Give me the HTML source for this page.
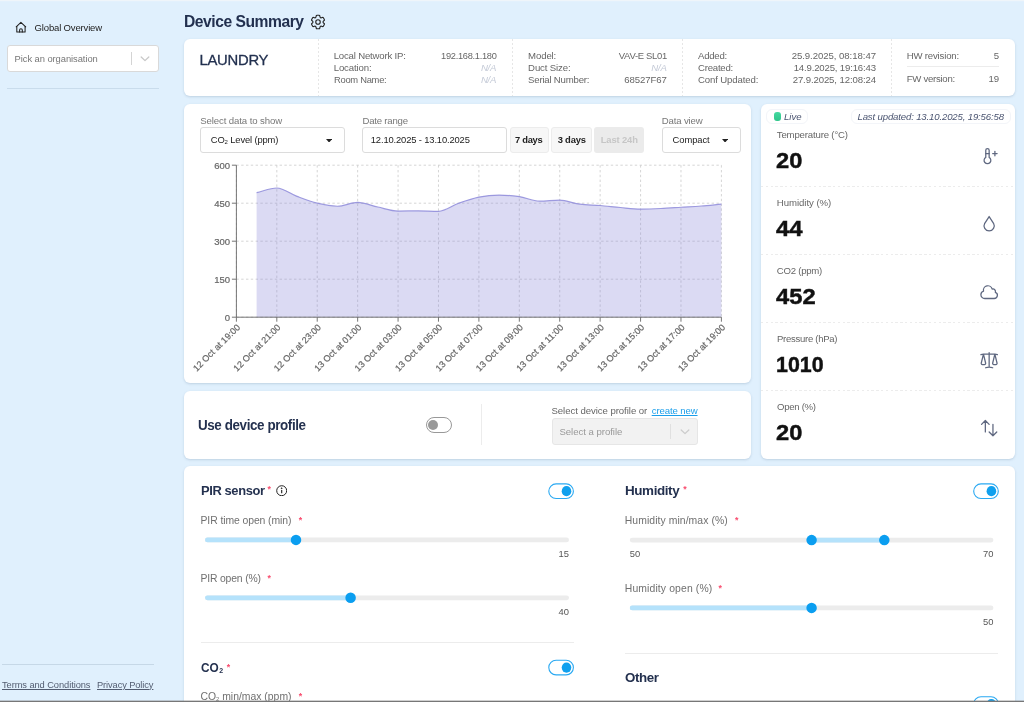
<!DOCTYPE html>
<html lang="en"><head><meta charset="utf-8"><title>Device Summary</title>
<style>
html,body{margin:0;padding:0}
body{width:1024px;height:702px;overflow:hidden;position:relative;background:#e0f0fd;font-family:"Liberation Sans",sans-serif}
.t{position:absolute;white-space:nowrap;line-height:1;display:block}
.b{position:absolute;display:block}
#root{position:absolute;left:0;top:0;width:1024px;height:702px;will-change:transform}
</style></head><body>
<div id="root">
<svg class="b" style="left:0;top:0" width="40" height="40" viewBox="0 0 40 40" fill="none" stroke="#222" stroke-width="1.05" stroke-linejoin="round" stroke-linecap="round"><path d="M16.2 26.8 20.9 22.3 25.7 26.9"/><path d="M16.8 26.4V32H25.1V26.4"/><path d="M19.6 32V30a1.35 1.35 0 0 1 2.7 0V32"/></svg>
<span class="t" style="top:23.00px;font-size:9.50px;color:#222;left:34.60px;letter-spacing:-0.157px;">Global Overview</span>
<div class="b" style="left:7.00px;top:45.30px;width:151.60px;height:27.00px;background:#fff;border:1px solid #d9d9d9;border-radius:3px;box-sizing:border-box;"></div>
<span class="t" style="top:54.05px;font-size:9.40px;color:#777;left:14.60px;letter-spacing:-0.066px;">Pick an organisation</span>
<div class="b" style="left:131.00px;top:51.80px;width:1.00px;height:13.60px;background:#d4d4d4;"></div>
<svg class="b" style="left:140px;top:55px" width="10" height="8" viewBox="0 0 10 8" fill="none" stroke="#c8c8c8" stroke-width="1.3" stroke-linecap="round" stroke-linejoin="round"><path d="M1.2 2 5 5.6 8.8 2"/></svg>
<div class="b" style="left:7.00px;top:88.40px;width:151.60px;height:1.00px;background:#c9dcec;"></div>
<div class="b" style="left:2.00px;top:664.00px;width:151.50px;height:1.00px;background:#c6d8e7;"></div>
<span class="t" style="top:680.60px;font-size:9.30px;color:#525c70;left:2.00px;letter-spacing:-0.076px;text-decoration:underline;">Terms and Conditions</span>
<span class="t" style="top:680.60px;font-size:9.30px;color:#525c70;left:97.00px;letter-spacing:-0.106px;text-decoration:underline;">Privacy Policy</span>
<span class="t" style="top:13.85px;font-size:15.80px;color:#22304f;left:184.30px;font-weight:700;letter-spacing:-0.474px;transform:scaleX(0.9902);transform-origin:0 50%;">Device Summary</span>
<svg class="b" style="left:309.35px;top:12.5px" width="18" height="18" viewBox="0 0 24 24" fill="none" stroke="#222" stroke-width="1.5" stroke-linecap="round" stroke-linejoin="round"><path d="M9.594 3.94c.09-.542.56-.94 1.11-.94h2.593c.55 0 1.02.398 1.11.94l.213 1.281c.063.374.313.686.645.87.074.04.147.083.22.127.325.196.72.257 1.075.124l1.217-.456a1.125 1.125 0 0 1 1.37.49l1.296 2.247a1.125 1.125 0 0 1-.26 1.431l-1.003.827c-.293.241-.438.613-.43.992a7.723 7.723 0 0 1 0 .255c-.008.378.137.75.43.991l1.004.827c.424.35.534.955.26 1.43l-1.298 2.247a1.125 1.125 0 0 1-1.369.491l-1.217-.456c-.355-.133-.75-.072-1.076.124a6.470 6.470 0 0 1-.22.128c-.331.183-.581.495-.644.869l-.213 1.281c-.09.543-.56.94-1.110.94h-2.594c-.55 0-1.019-.398-1.11-.94l-.213-1.281c-.062-.374-.312-.686-.644-.87a6.520 6.520 0 0 1-.22-.127c-.325-.196-.72-.257-1.076-.124l-1.217.456a1.125 1.125 0 0 1-1.369-.49l-1.297-2.247a1.125 1.125 0 0 1 .26-1.431l1.004-.827c.292-.24.437-.613.43-.991a6.932 6.932 0 0 1 0-.255c.007-.38-.138-.751-.43-.992l-1.004-.827a1.125 1.125 0 0 1-.26-1.43l1.297-2.247a1.125 1.125 0 0 1 1.37-.491l1.216.456c.356.133.751.072 1.076-.124.072-.044.146-.086.22-.128.332-.183.582-.495.644-.869l.214-1.280Z"/><path d="M15 12a3 3 0 1 1-6 0 3 3 0 0 1 6 0Z"/></svg>
<div class="b" style="left:184.00px;top:39.00px;width:830.60px;height:57.00px;background:#fff;border-radius:6px;box-shadow:0 1px 2.5px rgba(70,100,130,.22);"></div>
<span class="t" style="top:52.85px;font-size:14.80px;color:#22304f;left:199.50px;letter-spacing:-0.244px;-webkit-text-stroke:0.3px #22304f;">LAUNDRY</span>
<div class="b" style="left:318.00px;top:39.00px;width:1.00px;height:57.00px;background:repeating-linear-gradient(to bottom,#e6e6e6 0 2px,transparent 2px 4px);"></div>
<div class="b" style="left:511.80px;top:39.00px;width:1.00px;height:57.00px;background:repeating-linear-gradient(to bottom,#e6e6e6 0 2px,transparent 2px 4px);"></div>
<div class="b" style="left:682.20px;top:39.00px;width:1.00px;height:57.00px;background:repeating-linear-gradient(to bottom,#e6e6e6 0 2px,transparent 2px 4px);"></div>
<div class="b" style="left:890.50px;top:39.00px;width:1.00px;height:57.00px;background:repeating-linear-gradient(to bottom,#e6e6e6 0 2px,transparent 2px 4px);"></div>
<span class="t" style="top:50.95px;font-size:9.60px;color:#666;left:333.70px;letter-spacing:-0.189px;">Local Network IP:</span>
<span class="t" style="top:50.95px;font-size:9.60px;color:#666;right:527.88px;letter-spacing:-0.288px;transform:scaleX(0.9648);transform-origin:100% 50%;">192.168.1.180</span>
<span class="t" style="top:62.95px;font-size:9.60px;color:#666;left:333.70px;letter-spacing:-0.120px;">Location:</span>
<span class="t" style="top:62.95px;font-size:9.60px;color:#c3c9d6;right:527.87px;font-style:italic;letter-spacing:-0.270px;">N/A</span>
<span class="t" style="top:74.95px;font-size:9.60px;color:#666;left:333.70px;letter-spacing:-0.288px;transform:scaleX(0.9767);transform-origin:0 50%;">Room Name:</span>
<span class="t" style="top:74.95px;font-size:9.60px;color:#c3c9d6;right:527.87px;font-style:italic;letter-spacing:-0.270px;">N/A</span>
<span class="t" style="top:50.95px;font-size:9.60px;color:#666;left:528.10px;letter-spacing:-0.123px;">Model:</span>
<span class="t" style="top:50.95px;font-size:9.60px;color:#666;right:357.48px;letter-spacing:-0.288px;transform:scaleX(0.9847);transform-origin:100% 50%;">VAV-E SL01</span>
<span class="t" style="top:62.95px;font-size:9.60px;color:#666;left:528.10px;letter-spacing:-0.139px;">Duct Size:</span>
<span class="t" style="top:62.95px;font-size:9.60px;color:#c3c9d6;right:357.47px;font-style:italic;letter-spacing:-0.270px;">N/A</span>
<span class="t" style="top:74.95px;font-size:9.60px;color:#666;left:528.10px;letter-spacing:-0.202px;">Serial Number:</span>
<span class="t" style="top:74.95px;font-size:9.60px;color:#666;right:357.31px;letter-spacing:-0.106px;">68527F67</span>
<span class="t" style="top:50.95px;font-size:9.60px;color:#666;left:698.00px;letter-spacing:-0.245px;">Added:</span>
<span class="t" style="top:50.95px;font-size:9.60px;color:#666;right:148.06px;letter-spacing:-0.056px;">25.9.2025, 08:18:47</span>
<span class="t" style="top:62.95px;font-size:9.60px;color:#666;left:698.00px;letter-spacing:-0.217px;">Created:</span>
<span class="t" style="top:62.95px;font-size:9.60px;color:#666;right:148.17px;letter-spacing:-0.167px;">14.9.2025, 19:16:43</span>
<span class="t" style="top:74.95px;font-size:9.60px;color:#666;left:698.00px;letter-spacing:-0.126px;">Conf Updated:</span>
<span class="t" style="top:74.95px;font-size:9.60px;color:#666;right:148.11px;letter-spacing:-0.112px;">27.9.2025, 12:08:24</span>
<span class="t" style="top:50.95px;font-size:9.60px;color:#666;left:906.70px;letter-spacing:-0.174px;">HW revision:</span>
<span class="t" style="top:50.95px;font-size:9.60px;color:#666;right:24.90px;">5</span>
<div class="b" style="left:906.70px;top:66.20px;width:92.40px;height:1.00px;background:#ececec;"></div>
<span class="t" style="top:73.95px;font-size:9.60px;color:#666;left:906.70px;letter-spacing:-0.271px;">FW version:</span>
<span class="t" style="top:73.95px;font-size:9.60px;color:#666;right:24.90px;">19</span>
<div class="b" style="left:184.00px;top:103.50px;width:566.70px;height:279.50px;background:#fff;border-radius:6px;box-shadow:0 1px 2.5px rgba(70,100,130,.22);"></div>
<span class="t" style="top:115.95px;font-size:9.60px;color:#777;left:200.20px;letter-spacing:-0.099px;">Select data to show</span>
<span class="t" style="top:115.95px;font-size:9.60px;color:#777;left:362.50px;letter-spacing:-0.222px;">Date range</span>
<span class="t" style="top:115.95px;font-size:9.60px;color:#777;left:661.70px;letter-spacing:-0.144px;">Data view</span>
<div class="b" style="left:200.20px;top:127.00px;width:144.50px;height:25.60px;background:#fff;border:1px solid #dcdcdc;border-radius:3px;box-sizing:border-box;"></div>
<span class="t" style="top:135.05px;font-size:9.40px;color:#222;left:210.80px;letter-spacing:-0.14px;">CO<span style="font-size:6px;position:relative;top:1px">2</span> Level (ppm)</span>
<svg class="b" style="left:326px;top:138.5px" width="6.2" height="3.6" viewBox="0 0 7 4"><path d="M0 0h7L3.5 4z" fill="#222"/></svg>
<div class="b" style="left:362.20px;top:127.00px;width:144.60px;height:25.60px;background:#fff;border:1px solid #dcdcdc;border-radius:3px;box-sizing:border-box;"></div>
<span class="t" style="top:135.05px;font-size:9.40px;color:#222;left:370.80px;letter-spacing:-0.139px;">12.10.2025 - 13.10.2025</span>
<div class="b" style="left:509.50px;top:127.00px;width:39.30px;height:25.60px;background:#f7f7f7;border:1px solid #ececec;border-radius:3px;box-sizing:border-box;"></div>
<span class="t" style="top:135.05px;font-size:9.40px;color:#222;left:515.30px;font-weight:700;letter-spacing:-0.282px;transform:scaleX(0.9980);transform-origin:0 50%;">7 days</span>
<div class="b" style="left:551.30px;top:127.00px;width:40.40px;height:25.60px;background:#f7f7f7;border:1px solid #ececec;border-radius:3px;box-sizing:border-box;"></div>
<span class="t" style="top:135.05px;font-size:9.40px;color:#222;left:557.70px;font-weight:700;letter-spacing:-0.193px;">3 days</span>
<div class="b" style="left:594.30px;top:127.00px;width:49.80px;height:25.60px;background:#ebebeb;border-radius:3px;"></div>
<span class="t" style="top:135.05px;font-size:9.40px;color:#c6c6c6;left:600.70px;font-weight:700;letter-spacing:-0.120px;">Last 24h</span>
<div class="b" style="left:661.70px;top:127.00px;width:78.90px;height:25.60px;background:#fff;border:1px solid #dcdcdc;border-radius:3px;box-sizing:border-box;"></div>
<span class="t" style="top:135.05px;font-size:9.40px;color:#222;left:672.50px;letter-spacing:-0.052px;">Compact</span>
<svg class="b" style="left:722px;top:138.5px" width="6.2" height="3.6" viewBox="0 0 7 4"><path d="M0 0h7L3.5 4z" fill="#222"/></svg>
<svg class="b" style="left:0;top:0" width="1024" height="702" viewBox="0 0 1024 702" font-family="Liberation Sans, sans-serif"><g stroke="#cdcdcd" stroke-width="0.85" stroke-dasharray="2.4 2.4" fill="none"><line x1="236.40" y1="165.20" x2="236.40" y2="317.20"/><line x1="276.82" y1="165.20" x2="276.82" y2="317.20"/><line x1="317.23" y1="165.20" x2="317.23" y2="317.20"/><line x1="357.65" y1="165.20" x2="357.65" y2="317.20"/><line x1="398.07" y1="165.20" x2="398.07" y2="317.20"/><line x1="438.48" y1="165.20" x2="438.48" y2="317.20"/><line x1="478.90" y1="165.20" x2="478.90" y2="317.20"/><line x1="519.32" y1="165.20" x2="519.32" y2="317.20"/><line x1="559.73" y1="165.20" x2="559.73" y2="317.20"/><line x1="600.15" y1="165.20" x2="600.15" y2="317.20"/><line x1="640.57" y1="165.20" x2="640.57" y2="317.20"/><line x1="680.98" y1="165.20" x2="680.98" y2="317.20"/><line x1="721.40" y1="165.20" x2="721.40" y2="317.20"/><line x1="236.40" y1="317.20" x2="721.40" y2="317.20"/><line x1="236.40" y1="279.20" x2="721.40" y2="279.20"/><line x1="236.40" y1="241.20" x2="721.40" y2="241.20"/><line x1="236.40" y1="203.20" x2="721.40" y2="203.20"/><line x1="236.40" y1="165.20" x2="721.40" y2="165.20"/></g><path d="M256.61 192.56C263.34 191.04 270.08 188.00 276.82 188.00C283.55 188.00 290.29 193.83 297.02 196.36C303.76 198.89 310.50 201.55 317.23 203.20C323.97 204.85 330.71 206.24 337.44 206.24C344.18 206.24 350.91 202.44 357.65 202.44C364.39 202.44 371.12 205.56 377.86 207.00C384.59 208.44 391.33 211.05 398.07 211.05C404.80 211.05 411.54 210.80 418.27 210.80C425.01 210.80 431.75 211.31 438.48 211.31C445.22 211.31 451.96 205.56 458.69 203.20C465.43 200.84 472.16 198.47 478.90 197.12C485.64 195.77 492.37 195.09 499.11 195.09C505.84 195.09 512.58 195.60 519.32 196.61C526.05 197.63 532.79 201.17 539.52 201.17C546.26 201.17 553.00 200.16 559.73 200.16C566.47 200.16 573.21 203.33 579.94 204.21C586.68 205.10 593.41 204.93 600.15 205.48C606.89 206.03 613.62 206.92 620.36 207.51C627.09 208.10 633.83 209.03 640.57 209.03C647.30 209.03 654.04 208.82 660.77 208.52C667.51 208.22 674.25 207.68 680.98 207.25C687.72 206.83 694.46 206.49 701.19 205.99C707.93 205.48 714.66 204.80 721.40 204.21L721.40 317.20L256.61 317.20Z" fill="#8884d8" fill-opacity="0.3"/><path d="M256.61 192.56C263.34 191.04 270.08 188.00 276.82 188.00C283.55 188.00 290.29 193.83 297.02 196.36C303.76 198.89 310.50 201.55 317.23 203.20C323.97 204.85 330.71 206.24 337.44 206.24C344.18 206.24 350.91 202.44 357.65 202.44C364.39 202.44 371.12 205.56 377.86 207.00C384.59 208.44 391.33 211.05 398.07 211.05C404.80 211.05 411.54 210.80 418.27 210.80C425.01 210.80 431.75 211.31 438.48 211.31C445.22 211.31 451.96 205.56 458.69 203.20C465.43 200.84 472.16 198.47 478.90 197.12C485.64 195.77 492.37 195.09 499.11 195.09C505.84 195.09 512.58 195.60 519.32 196.61C526.05 197.63 532.79 201.17 539.52 201.17C546.26 201.17 553.00 200.16 559.73 200.16C566.47 200.16 573.21 203.33 579.94 204.21C586.68 205.10 593.41 204.93 600.15 205.48C606.89 206.03 613.62 206.92 620.36 207.51C627.09 208.10 633.83 209.03 640.57 209.03C647.30 209.03 654.04 208.82 660.77 208.52C667.51 208.22 674.25 207.68 680.98 207.25C687.72 206.83 694.46 206.49 701.19 205.99C707.93 205.48 714.66 204.80 721.40 204.21" fill="none" stroke="#8884d8" stroke-opacity="0.8" stroke-width="1.2"/><g stroke="#666" stroke-width="0.9" fill="none"><line x1="236.40" y1="165.20" x2="236.40" y2="317.20"/><line x1="236.40" y1="317.20" x2="721.40" y2="317.20"/><line x1="236.40" y1="317.20" x2="236.40" y2="321.70"/><line x1="276.82" y1="317.20" x2="276.82" y2="321.70"/><line x1="317.23" y1="317.20" x2="317.23" y2="321.70"/><line x1="357.65" y1="317.20" x2="357.65" y2="321.70"/><line x1="398.07" y1="317.20" x2="398.07" y2="321.70"/><line x1="438.48" y1="317.20" x2="438.48" y2="321.70"/><line x1="478.90" y1="317.20" x2="478.90" y2="321.70"/><line x1="519.32" y1="317.20" x2="519.32" y2="321.70"/><line x1="559.73" y1="317.20" x2="559.73" y2="321.70"/><line x1="600.15" y1="317.20" x2="600.15" y2="321.70"/><line x1="640.57" y1="317.20" x2="640.57" y2="321.70"/><line x1="680.98" y1="317.20" x2="680.98" y2="321.70"/><line x1="721.40" y1="317.20" x2="721.40" y2="321.70"/><line x1="231.90" y1="317.20" x2="236.40" y2="317.20"/><line x1="231.90" y1="279.20" x2="236.40" y2="279.20"/><line x1="231.90" y1="241.20" x2="236.40" y2="241.20"/><line x1="231.90" y1="203.20" x2="236.40" y2="203.20"/><line x1="231.90" y1="165.20" x2="236.40" y2="165.20"/></g><g fill="#666" stroke="#666" stroke-width="0.2" font-size="9.5"><text x="230" y="320.60" text-anchor="end">0</text><text x="230" y="282.60" text-anchor="end">150</text><text x="230" y="244.60" text-anchor="end">300</text><text x="230" y="206.60" text-anchor="end">450</text><text x="230" y="168.60" text-anchor="end">600</text><text text-anchor="end" font-size="9" letter-spacing="0.054" transform="translate(240.74 327.8) rotate(-45)">12 Oct at 19:00</text><text text-anchor="end" font-size="9" letter-spacing="0.054" transform="translate(281.15 327.8) rotate(-45)">12 Oct at 21:00</text><text text-anchor="end" font-size="9" letter-spacing="0.054" transform="translate(321.57 327.8) rotate(-45)">12 Oct at 23:00</text><text text-anchor="end" font-size="9" letter-spacing="0.054" transform="translate(361.99 327.8) rotate(-45)">13 Oct at 01:00</text><text text-anchor="end" font-size="9" letter-spacing="0.054" transform="translate(402.40 327.8) rotate(-45)">13 Oct at 03:00</text><text text-anchor="end" font-size="9" letter-spacing="0.054" transform="translate(442.82 327.8) rotate(-45)">13 Oct at 05:00</text><text text-anchor="end" font-size="9" letter-spacing="0.054" transform="translate(483.24 327.8) rotate(-45)">13 Oct at 07:00</text><text text-anchor="end" font-size="9" letter-spacing="0.054" transform="translate(523.65 327.8) rotate(-45)">13 Oct at 09:00</text><text text-anchor="end" font-size="9" letter-spacing="0.102" transform="translate(564.10 327.8) rotate(-45)">13 Oct at 11:00</text><text text-anchor="end" font-size="9" letter-spacing="0.054" transform="translate(604.49 327.8) rotate(-45)">13 Oct at 13:00</text><text text-anchor="end" font-size="9" letter-spacing="0.054" transform="translate(644.90 327.8) rotate(-45)">13 Oct at 15:00</text><text text-anchor="end" font-size="9" letter-spacing="0.054" transform="translate(685.32 327.8) rotate(-45)">13 Oct at 17:00</text><text text-anchor="end" font-size="9" letter-spacing="0.054" transform="translate(725.74 327.8) rotate(-45)">13 Oct at 19:00</text></g></svg>
<div class="b" style="left:760.80px;top:103.50px;width:253.80px;height:355.10px;background:#fff;border-radius:6px;box-shadow:0 1px 2.5px rgba(70,100,130,.22);"></div>
<div class="b" style="left:766.40px;top:109.20px;width:42.10px;height:15.20px;border:1px solid #f3f5f9;border-radius:6px;box-sizing:border-box;"></div>
<div class="b" style="left:773.80px;top:112.20px;width:7.30px;height:8.80px;background:linear-gradient(#46d9a0,#2fc58a);border-radius:3px;"></div>
<span class="t" style="top:111.95px;font-size:9.60px;color:#4a5470;left:783.90px;font-style:italic;letter-spacing:0.018px;">Live</span>
<div class="b" style="left:850.60px;top:109.20px;width:160.90px;height:15.20px;border:1px solid #f3f5f9;border-radius:6px;box-sizing:border-box;"></div>
<span class="t" style="top:111.95px;font-size:9.60px;color:#4a5470;left:857.50px;font-style:italic;letter-spacing:-0.152px;">Last updated: 13.10.2025, 19:56:58</span>
<span class="t" style="top:129.95px;font-size:9.60px;color:#666;left:776.80px;letter-spacing:-0.162px;">Temperature (°C)</span>
<span class="t" style="top:149.75px;font-size:22.00px;color:#111;left:776.20px;font-weight:700;transform:scaleX(1.0739);transform-origin:0 50%;-webkit-text-stroke:0.45px #111;">20</span>
<div class="b" style="left:760.80px;top:185.50px;width:253.80px;height:1.00px;background:repeating-linear-gradient(to right,#ececec 0 2.4px,transparent 2.4px 4.8px);"></div>
<span class="t" style="top:197.95px;font-size:9.60px;color:#666;left:776.80px;letter-spacing:-0.040px;">Humidity (%)</span>
<span class="t" style="top:217.75px;font-size:22.00px;color:#111;left:776.20px;font-weight:700;transform:scaleX(1.0862);transform-origin:0 50%;-webkit-text-stroke:0.45px #111;">44</span>
<div class="b" style="left:760.80px;top:253.50px;width:253.80px;height:1.00px;background:repeating-linear-gradient(to right,#ececec 0 2.4px,transparent 2.4px 4.8px);"></div>
<span class="t" style="top:265.95px;font-size:9.60px;color:#666;left:776.80px;letter-spacing:-0.247px;">CO2 (ppm)</span>
<span class="t" style="top:285.75px;font-size:22.00px;color:#111;left:776.20px;font-weight:700;transform:scaleX(1.0783);transform-origin:0 50%;-webkit-text-stroke:0.45px #111;">452</span>
<div class="b" style="left:760.80px;top:321.50px;width:253.80px;height:1.00px;background:repeating-linear-gradient(to right,#ececec 0 2.4px,transparent 2.4px 4.8px);"></div>
<span class="t" style="top:333.95px;font-size:9.60px;color:#666;left:776.80px;letter-spacing:-0.288px;transform:scaleX(0.9948);transform-origin:0 50%;">Pressure (hPa)</span>
<span class="t" style="top:353.75px;font-size:22.00px;color:#111;left:776.20px;font-weight:700;transform:scaleX(0.9721);transform-origin:0 50%;-webkit-text-stroke:0.45px #111;">1010</span>
<div class="b" style="left:760.80px;top:389.50px;width:253.80px;height:1.00px;background:repeating-linear-gradient(to right,#ececec 0 2.4px,transparent 2.4px 4.8px);"></div>
<span class="t" style="top:401.95px;font-size:9.60px;color:#666;left:776.80px;letter-spacing:-0.288px;transform:scaleX(0.9983);transform-origin:0 50%;">Open (%)</span>
<span class="t" style="top:421.75px;font-size:22.00px;color:#111;left:776.20px;font-weight:700;transform:scaleX(1.0739);transform-origin:0 50%;-webkit-text-stroke:0.45px #111;">20</span>
<svg class="b" style="left:979px;top:145.75px" width="20.3" height="20.3" viewBox="0 0 24 24" fill="none" stroke="#5f6880" stroke-width="1.5" stroke-linecap="round" stroke-linejoin="round"><path d="M8 13.5a4 4 0 1 0 4 0v-8.5a2 2 0 0 0 -4 0v8.5"/><path d="M8 9h4"/><path d="M16.2 9h5.2"/><path d="M18.8 6.4v5.2"/></svg><svg class="b" style="left:979px;top:213.75px" width="20.3" height="20.3" viewBox="0 0 24 24" fill="none" stroke="#5f6880" stroke-width="1.5" stroke-linecap="round" stroke-linejoin="round"><path d="M6.8 11a6 6 0 1 0 10.396 0l-5.197 -8l-5.2 8z"/></svg><svg class="b" style="left:979px;top:281.75px" width="20.3" height="20.3" viewBox="0 0 24 24" fill="none" stroke="#5f6880" stroke-width="1.5" stroke-linecap="round" stroke-linejoin="round"><path d="M2.25 15a4.5 4.5 0 0 0 4.5 4.5H18a3.75 3.75 0 0 0 1.332-7.257 3 3 0 0 0-3.758-3.848 5.25 5.25 0 0 0-10.233 2.33A4.502 4.502 0 0 0 2.25 15Z"/></svg><svg class="b" style="left:979px;top:349.75px" width="20.3" height="20.3" viewBox="0 0 24 24" fill="none" stroke="#5f6880" stroke-width="1.5" stroke-linecap="round" stroke-linejoin="round"><path d="M12 3v17.25m0 0c-1.472 0-2.882.265-4.185.75M12 20.25c1.472 0 2.882.265 4.185.75M18.75 4.97A48.416 48.416 0 0 0 12 4.5c-2.291 0-4.545.16-6.75.47m13.5 0c1.01.143 2.01.317 3 .52m-3-.52 2.62 10.726c.122.499-.106 1.028-.589 1.202a5.988 5.988 0 0 1-2.031.352 5.988 5.988 0 0 1-2.031-.352c-.483-.174-.711-.703-.59-1.202L18.75 4.971Zm-16.5.52c.99-.203 1.99-.377 3-.52m0 0 2.62 10.726c.122.499-.106 1.028-.589 1.202a5.989 5.989 0 0 1-2.031.352 5.989 5.989 0 0 1-2.031-.352c-.483-.174-.711-.703-.59-1.202L5.25 4.971Z"/></svg><svg class="b" style="left:979px;top:417.75px" width="20.3" height="20.3" viewBox="0 0 24 24" fill="none" stroke="#5f6880" stroke-width="1.5" stroke-linecap="round" stroke-linejoin="round"><path d="M3 7.5 7.500 3m0 0L12 7.500M7.500 3v13.500m13.500 0L16.500 21m0 0L12 16.500m4.500 4.500V7.500"/></svg>
<div class="b" style="left:184.00px;top:391.00px;width:566.70px;height:67.60px;background:#fff;border-radius:6px;box-shadow:0 1px 2.5px rgba(70,100,130,.22);"></div>
<span class="t" style="top:418.25px;font-size:14.00px;color:#24314f;left:197.80px;font-weight:700;letter-spacing:-0.420px;transform:scaleX(0.9584);transform-origin:0 50%;">Use device profile</span>
<div class="b" style="left:426.00px;top:417.20px;width:25.60px;height:15.40px;background:#fff;border:1px solid #999;border-radius:8px;box-sizing:border-box;"></div>
<div class="b" style="left:428.30px;top:419.90px;width:10.00px;height:10.00px;background:#999;border-radius:50%;"></div>
<div class="b" style="left:481.40px;top:404.00px;width:1.00px;height:41.00px;background:#ececec;"></div>
<span class="t" style="top:405.95px;font-size:9.60px;color:#666;left:551.50px;letter-spacing:-0.057px;">Select device profile or</span>
<span class="t" style="top:405.95px;font-size:9.60px;color:#1a9eea;left:651.70px;letter-spacing:-0.107px;text-decoration:underline;">create new</span>
<div class="b" style="left:551.50px;top:417.80px;width:146.30px;height:26.80px;background:#f2f2f2;border:1px solid #e6e6e6;border-radius:3px;box-sizing:border-box;"></div>
<span class="t" style="top:426.95px;font-size:9.60px;color:#999;left:559.40px;letter-spacing:-0.034px;">Select a profile</span>
<div class="b" style="left:670.20px;top:424.00px;width:1.00px;height:14.50px;background:#e0e0e0;"></div>
<svg class="b" style="left:679.5px;top:428px" width="10" height="8" viewBox="0 0 10 8" fill="none" stroke="#ccc" stroke-width="1.3" stroke-linecap="round" stroke-linejoin="round"><path d="M1.2 2 5 5.6 8.8 2"/></svg>
<div class="b" style="left:184.00px;top:465.70px;width:830.60px;height:254.30px;background:#fff;border-radius:6px;box-shadow:0 1px 2.5px rgba(70,100,130,.22);"></div>
<span class="t" style="top:483.95px;font-size:13.60px;color:#24314f;left:200.50px;font-weight:700;letter-spacing:-0.408px;transform:scaleX(0.9499);transform-origin:0 50%;">PIR sensor</span>
<span class="t" style="top:484.85px;font-size:8.80px;color:#f94c6e;left:267.60px;font-weight:700;">*</span>
<svg class="b" style="left:276px;top:484.7px" width="11.4" height="11.4" viewBox="0 0 16 16" fill="none" stroke="#222" stroke-width="1.4"><circle cx="8" cy="8" r="7"/><path d="M8 7v4.6" stroke-width="1.6"/><circle cx="8" cy="4.6" r=".6" fill="#222"/></svg>
<span class="t" style="top:515.55px;font-size:10.40px;color:#707070;left:200.50px;letter-spacing:-0.082px;">PIR time open (min)</span>
<span class="t" style="top:515.85px;font-size:8.80px;color:#f94c6e;left:298.80px;font-weight:700;">*</span>
<span class="t" style="top:549.05px;font-size:9.40px;color:#555;right:455.00px;">15</span>
<span class="t" style="top:573.55px;font-size:10.40px;color:#707070;left:200.50px;letter-spacing:-0.175px;">PIR open (%)</span>
<span class="t" style="top:573.85px;font-size:8.80px;color:#f94c6e;left:267.60px;font-weight:700;">*</span>
<span class="t" style="top:607.05px;font-size:9.40px;color:#555;right:455.00px;">40</span>
<div class="b" style="left:200.50px;top:642.00px;width:373.30px;height:1.00px;background:#ececec;"></div>
<span class="t" style="top:660.95px;font-size:13.60px;color:#24314f;left:200.50px;font-weight:700;transform:scaleX(0.87);transform-origin:0 50%;">CO<span style="font-size:8px;position:relative;top:1.2px;font-weight:700;margin-left:0.6px">2</span></span>
<span class="t" style="top:662.85px;font-size:8.80px;color:#f94c6e;left:226.80px;font-weight:700;">*</span>
<span class="t" style="top:691.55px;font-size:10.40px;color:#707070;left:200.50px;">CO<span style="font-size:5.8px;position:relative;top:1px">2</span> min/max (ppm)</span>
<span class="t" style="top:691.85px;font-size:8.80px;color:#f94c6e;left:298.80px;font-weight:700;">*</span>
<span class="t" style="top:483.95px;font-size:13.60px;color:#24314f;left:624.80px;font-weight:700;letter-spacing:-0.408px;transform:scaleX(0.9887);transform-origin:0 50%;">Humidity</span>
<span class="t" style="top:484.85px;font-size:8.80px;color:#f94c6e;left:683.20px;font-weight:700;">*</span>
<span class="t" style="top:515.55px;font-size:10.40px;color:#707070;left:624.80px;letter-spacing:0.068px;">Humidity min/max (%)</span>
<span class="t" style="top:515.85px;font-size:8.80px;color:#f94c6e;left:734.90px;font-weight:700;">*</span>
<span class="t" style="top:549.05px;font-size:9.40px;color:#555;left:629.80px;">50</span>
<span class="t" style="top:549.05px;font-size:9.40px;color:#555;right:30.60px;">70</span>
<span class="t" style="top:583.55px;font-size:10.40px;color:#707070;left:624.80px;letter-spacing:0.122px;">Humidity open (%)</span>
<span class="t" style="top:583.85px;font-size:8.80px;color:#f94c6e;left:718.40px;font-weight:700;">*</span>
<span class="t" style="top:617.05px;font-size:9.40px;color:#555;right:30.60px;">50</span>
<div class="b" style="left:624.80px;top:652.50px;width:373.50px;height:1.00px;background:#ececec;"></div>
<span class="t" style="top:670.95px;font-size:13.60px;color:#24314f;left:624.80px;font-weight:700;letter-spacing:-0.408px;transform:scaleX(0.9815);transform-origin:0 50%;">Other</span>
<svg class="b" style="left:0;top:0" width="1024" height="702" viewBox="0 0 1024 702"><rect x="548.80" y="483.90" width="24.6" height="14.6" rx="7.3" fill="#fff" stroke="#2aa9f2" stroke-width="1.1"/><ellipse cx="566.50" cy="491.20" rx="4.8" ry="5.1" fill="#10a0ee"/><rect x="205.00" y="537.50" width="364.00" height="4.8" rx="2.4" fill="#ececec"/><rect x="205.00" y="537.50" width="91.00" height="4.8" rx="2.4" fill="#b5e2fb"/><circle cx="296.00" cy="539.90" r="5.25" fill="#0b9ef0"/><rect x="205.00" y="595.40" width="364.00" height="4.8" rx="2.4" fill="#ececec"/><rect x="205.00" y="595.40" width="145.60" height="4.8" rx="2.4" fill="#b5e2fb"/><circle cx="350.60" cy="597.80" r="5.25" fill="#0b9ef0"/><rect x="548.80" y="660.30" width="24.6" height="14.6" rx="7.3" fill="#fff" stroke="#2aa9f2" stroke-width="1.1"/><ellipse cx="566.50" cy="667.60" rx="4.8" ry="5.1" fill="#10a0ee"/><rect x="973.70" y="483.90" width="24.6" height="14.6" rx="7.3" fill="#fff" stroke="#2aa9f2" stroke-width="1.1"/><ellipse cx="991.40" cy="491.20" rx="4.8" ry="5.1" fill="#10a0ee"/><rect x="629.80" y="537.70" width="363.60" height="4.8" rx="2.4" fill="#ececec"/><rect x="811.60" y="537.70" width="72.72" height="4.8" rx="2.4" fill="#b5e2fb"/><circle cx="811.60" cy="540.10" r="5.25" fill="#0b9ef0"/><circle cx="884.32" cy="540.10" r="5.25" fill="#0b9ef0"/><rect x="629.80" y="605.50" width="363.60" height="4.8" rx="2.4" fill="#ececec"/><rect x="629.80" y="605.50" width="181.80" height="4.8" rx="2.4" fill="#b5e2fb"/><circle cx="811.60" cy="607.90" r="5.25" fill="#0b9ef0"/><rect x="973.70" y="696.70" width="24.6" height="14.6" rx="7.3" fill="#fff" stroke="#2aa9f2" stroke-width="1.1"/><ellipse cx="991.40" cy="704.00" rx="4.8" ry="5.1" fill="#10a0ee"/></svg>
<div class="b" style="left:0.00px;top:700.00px;width:1024.00px;height:1.00px;background:rgba(120,120,120,.35);"></div>
<div class="b" style="left:0.00px;top:701.00px;width:1024.00px;height:1.00px;background:#777;"></div>
<div class="b" style="left:0.00px;top:0.00px;width:1024.00px;height:1.00px;background:#eff5fa;"></div>
<div class="b" style="left:0.00px;top:1.00px;width:1024.00px;height:1.00px;background:rgba(255,255,255,.12);"></div>
</div>
</body></html>
